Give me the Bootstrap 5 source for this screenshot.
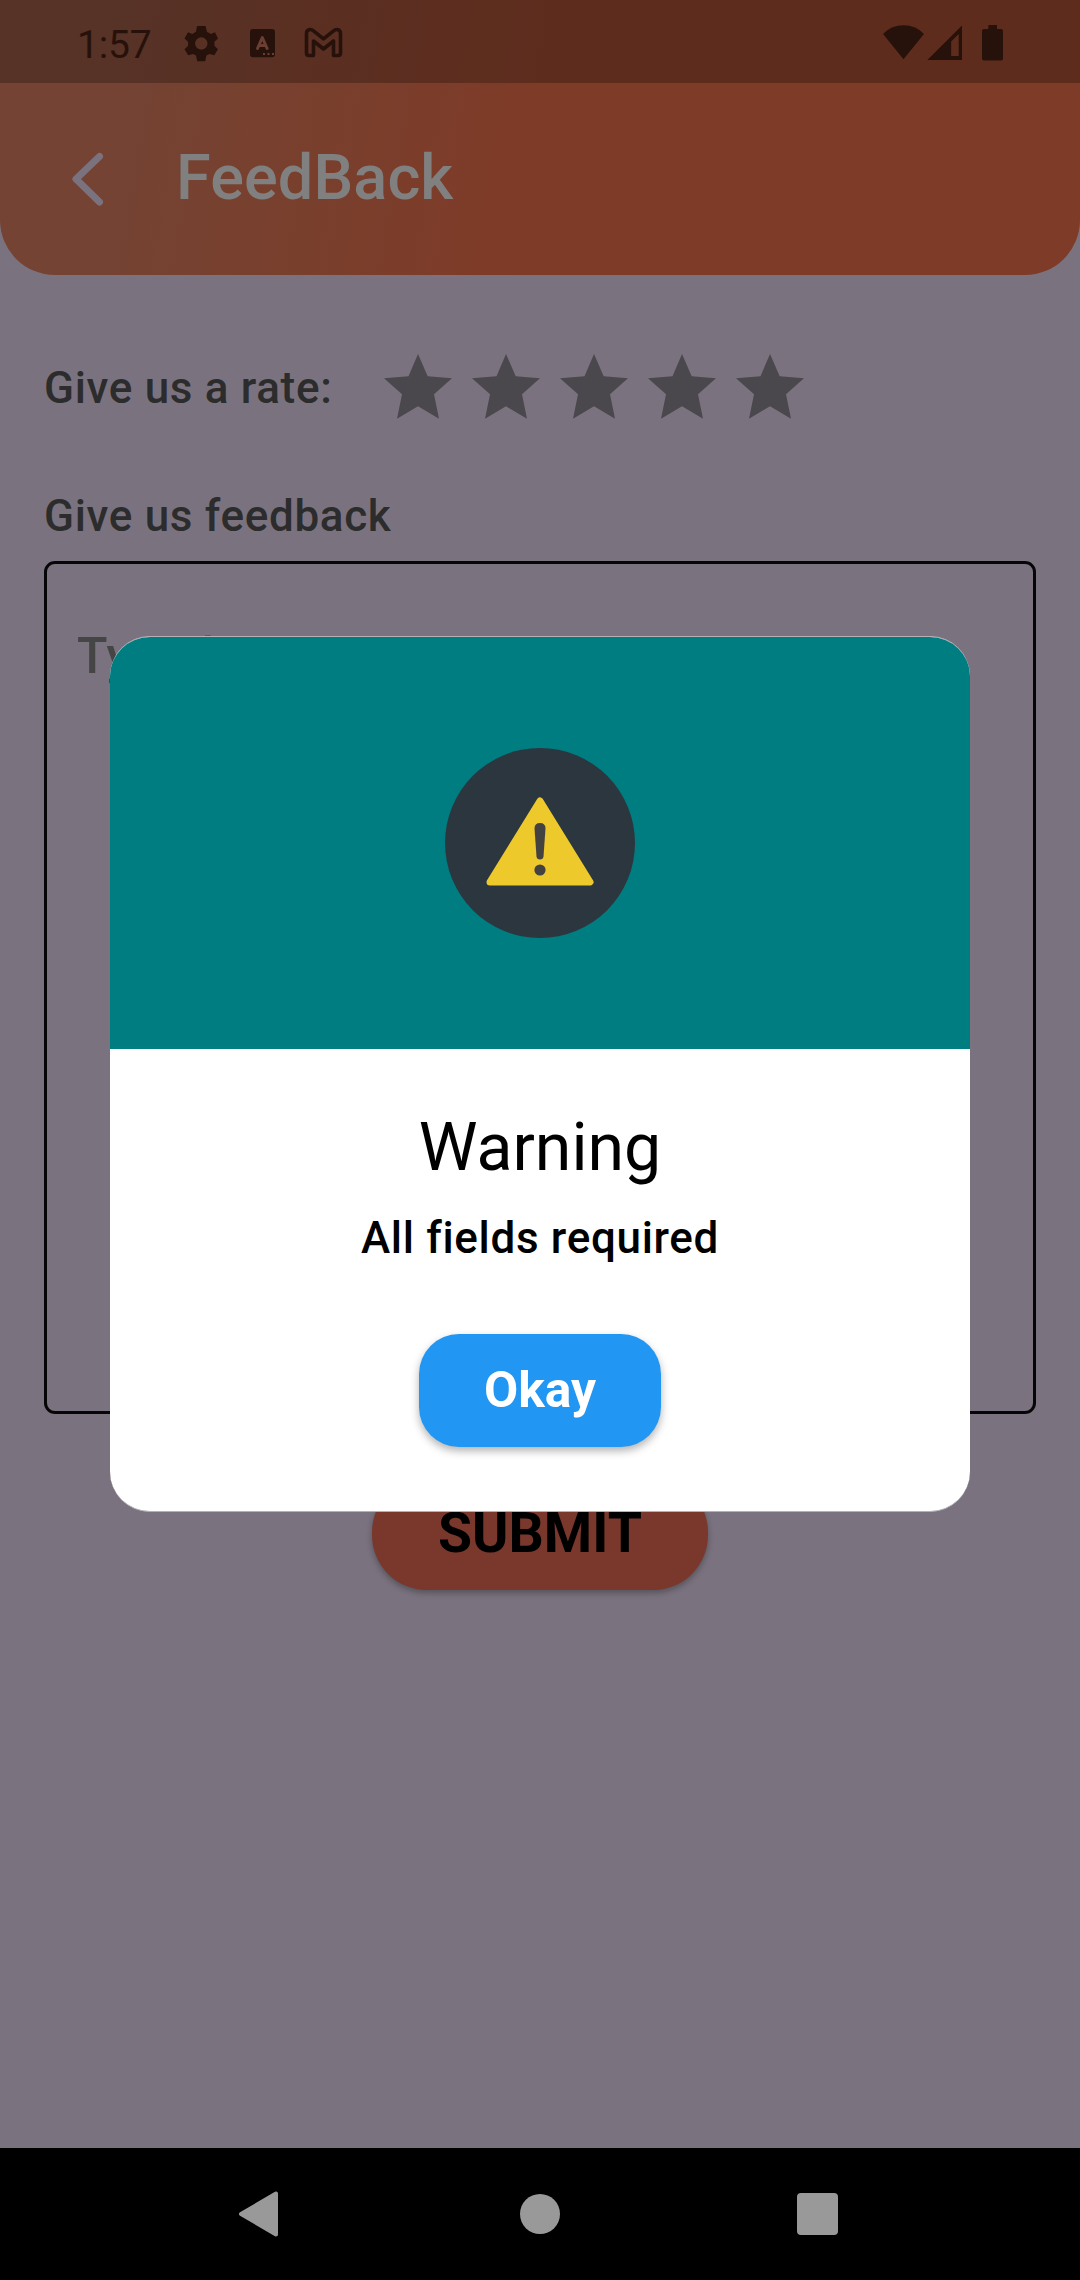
<!DOCTYPE html>
<html lang="en">
<head>
<meta charset="utf-8">
<meta name="viewport" content="width=device-width, initial-scale=1">
<title>FeedBack</title>
<link href="https://cdn.jsdelivr.net/npm/bootstrap@5.3.0/dist/css/bootstrap.min.css" rel="stylesheet">
<style>
body{font-family:Roboto,sans-serif;background:#7a737f;color:#000}
.screen{width:1080px;height:2280px;overflow:hidden}
.app-header{height:275px;border-radius:0 0 55px 55px;background:linear-gradient(100deg,#744333 0%,#744333 12%,#7e3b27 50%,#7e3b27 100%)}
.status-bar{height:83px;background:rgba(0,0,0,.25);color:#27110b;padding:0 77px}
.clock{font-size:39px;line-height:46px;width:107px;margin-top:6px;letter-spacing:-.2px}
.title-row{height:192px;padding-left:71px}
.app-title{font-size:63px;font-weight:500;line-height:74px;color:#808080;margin:-3px 0 0 72px;letter-spacing:.1px}
.form-area{padding:0 44px}
.rate-row{height:128px;margin-top:49px}
.field-label{font-size:44px;font-weight:500;line-height:50px;letter-spacing:.68px;color:#2c2c2c}
.feedback-label{margin-top:39px}
.stars{gap:20px;padding:0 0 4px 52px}
.message-box{height:853px;border:3px solid #060606;border-radius:11px;padding:63px 30px;margin-top:20px}
.hint{font-size:50px;font-weight:500;line-height:58px;color:#454545;letter-spacing:.9px}
.submit-btn{width:336px;height:113px;border-radius:55px;background:#7a372b;font-size:55.3px;font-weight:700;line-height:68px;margin-top:63px;box-shadow:0 3px 6px rgba(0,0,0,.3)}
.nav-keys{height:132px;background:#000;padding:0 241px 0 238px}
.home-key{margin-left:3px}
.overlay{height:2148px}
.dialog-card{width:860px;height:876px;border-radius:40px;overflow:hidden;background:#fff;border-top:1px solid #b3b0b6;border-bottom:1px solid #b3b0b6}
.dialog-head{height:412px;background:#007d81}
.dialog-title{font-size:66.2px;font-weight:400;line-height:77px;margin-top:60px}
.dialog-text{font-size:44px;font-weight:500;line-height:50px;letter-spacing:.68px;margin-top:27px}
.okay-btn{width:242px;height:113px;border-radius:40px;background:#2296f3;color:#fff;font-size:49.7px;font-weight:700;line-height:58px;margin-top:71px;padding:0 0 2px;box-shadow:0 4px 8px rgba(0,0,0,.3)}
</style>
</head>
<body>
<div class="screen d-flex flex-column position-relative">
  <header class="app-header">
    <div class="status-bar d-flex align-items-center justify-content-between">
      <div class="d-flex align-items-center">
        <span class="clock">1:57</span>
        <svg class="mt-1" width="160" height="40" viewBox="184 24 160 40" fill="#27110b">
          <path fill-rule="evenodd" d="M197 26h8.600l1.300 5.700 4 2.300 4.100-1.700 3 6.300-3.600 3.100v4l3.600 3.500-3.700 6.100-4.900-1.400-3 1.700-1.200 5.600h-8l-1.200-5.600-3-1.700-4.900 1.400-3.600-6.100 3.600-3.500v-4l-3.600-3.100 3.500-6.300 4.300 1.700 3.700-2.300zM201.300 37.300a6.200 6.200 0 1 0 .01 0z"/>
          <rect x="250" y="29" width="25" height="28.300" rx="3"/>
          <path d="M257.500 48.500l4.800-11 4.800 11M259.300 45.500h6" fill="none" stroke="#6a3e32" stroke-width="3" stroke-linecap="round" stroke-linejoin="round"/>
          <path d="M263 53h2v2h-2zM267.500 53h2v2h-2zM272 53h2v2h-2z" fill="#6a3e32"/>
          <path d="M306.500 33.500V53q0 2.500 2.500 2.500h4.500V41l10 8 10-8v14.500h4.500q2.500 0 2.500-2.500V33.500c0-4-4.200-5-7-2.700l-10 8-10-8c-2.800-2.300-7-1.300-7 2.700z" fill="none" stroke="#27110b" stroke-width="3.600" stroke-linejoin="round"/>
        </svg>
      </div>
      <svg class="mt-1" width="120" height="40" viewBox="883 24 120 40" fill="#27110b">
        <path d="M883 34Q891 25.300 903.500 25.300T924 34L903.500 59.300z"/>
        <path fill-rule="evenodd" d="M962 25.500V60h-34.700zM958.700 34l-7.500 7.500V56h7.500z"/>
        <path d="M988.300 25h8.700v4h4q2 0 2 2v27.500q0 2-2 2h-17q-2 0-2-2V31q0-2 2-2h4.300z"/>
      </svg>
    </div>
    <div class="title-row d-flex align-items-center">
      <svg width="33" height="56" viewBox="0 0 33 56" fill="none" stroke="#7a737f" stroke-width="7" stroke-linecap="round" stroke-linejoin="round"><path d="M28.500 5.500L5 28l23.500 23"/></svg>
      <h1 class="app-title">FeedBack</h1>
    </div>
  </header>

  <main class="form-area flex-grow-1 d-flex flex-column">
    <div class="rate-row d-flex align-items-center">
      <span class="field-label">Give us a rate:</span>
      <div class="stars d-flex" id="stars"></div>
    </div>
    <label class="field-label feedback-label">Give us feedback</label>
    <div class="message-box"><div class="hint">Type here</div></div>
    <button class="submit-btn border-0 align-self-center p-0">SUBMIT</button>
  </main>

  <nav class="nav-keys d-flex align-items-center justify-content-between">
    <svg width="42" height="48" viewBox="0 0 42 48"><path d="M3 24L38 3.500v41z" fill="#999" stroke="#999" stroke-width="4" stroke-linejoin="round"/></svg>
    <svg class="home-key" width="40" height="40" viewBox="0 0 40 40"><circle cx="20" cy="20" r="20" fill="#999"/></svg>
    <svg width="42" height="42" viewBox="0 0 42 42"><rect width="41" height="42" rx="4" fill="#999"/></svg>
  </nav>

  <div class="overlay position-absolute top-0 start-0 w-100 d-flex align-items-center justify-content-center">
    <div class="dialog-card d-flex flex-column align-items-center" role="dialog">
      <div class="dialog-head w-100 d-flex align-items-center justify-content-center">
        <svg width="190" height="190" viewBox="0 0 190 190">
          <circle cx="95" cy="95" r="95" fill="#2b363f"/>
          <path d="M95 53L145 134H45z" fill="#eec92c" stroke="#eec92c" stroke-width="7" stroke-linejoin="round"/>
          <path d="M89.500 80.500q0-5.500 5.500-5.500t5.500 5.500l-2 28q-.3 3-3.500 3t-3.500-3z" fill="#444240"/>
          <circle cx="95" cy="122" r="5.600" fill="#444240"/>
        </svg>
      </div>
      <h2 class="dialog-title mb-0">Warning</h2>
      <p class="dialog-text mb-0">All fields required</p>
      <button class="okay-btn border-0">Okay</button>
    </div>
  </div>
</div>
<script src="https://cdn.jsdelivr.net/npm/bootstrap@5.3.0/dist/js/bootstrap.bundle.min.js"></script>
<script>
  // Five unselected rating stars
  document.getElementById('stars').innerHTML = Array(5).fill('<svg width="68" height="65" viewBox="0 0 68 65" fill="#4a474d"><path d="M34 0L43.700 22.300 68 24.300 50 40.300 55 64.700 34 52.300 13 64.700 18 40.300 0 24.300 24.500 22.300z"/></svg>').join('');
</script>
</body>
</html>
